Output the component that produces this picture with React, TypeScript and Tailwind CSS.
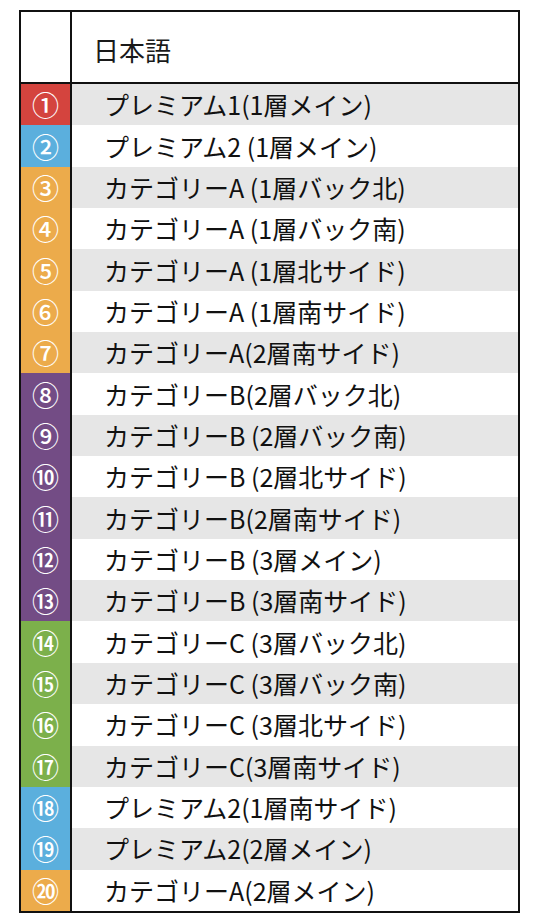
import React from 'react';

type Row = { no: string; label: string; color: string };

const RED = 'bg-[#d4443e]';
const BLUE = 'bg-[#5bafdd]';
const ORANGE = 'bg-[#ecab4b]';
const PURPLE = 'bg-[#734c85]';
const GREEN = 'bg-[#7cb04b]';

const rows: Row[] = [
  { no: '①', label: 'プレミアム1(1層メイン)', color: RED },
  { no: '②', label: 'プレミアム2 (1層メイン)', color: BLUE },
  { no: '③', label: 'カテゴリーA (1層バック北)', color: ORANGE },
  { no: '④', label: 'カテゴリーA (1層バック南)', color: ORANGE },
  { no: '⑤', label: 'カテゴリーA (1層北サイド)', color: ORANGE },
  { no: '⑥', label: 'カテゴリーA (1層南サイド)', color: ORANGE },
  { no: '⑦', label: 'カテゴリーA(2層南サイド)', color: ORANGE },
  { no: '⑧', label: 'カテゴリーB(2層バック北)', color: PURPLE },
  { no: '⑨', label: 'カテゴリーB (2層バック南)', color: PURPLE },
  { no: '⑩', label: 'カテゴリーB (2層北サイド)', color: PURPLE },
  { no: '⑪', label: 'カテゴリーB(2層南サイド)', color: PURPLE },
  { no: '⑫', label: 'カテゴリーB (3層メイン)', color: PURPLE },
  { no: '⑬', label: 'カテゴリーB (3層南サイド)', color: PURPLE },
  { no: '⑭', label: 'カテゴリーC (3層バック北)', color: GREEN },
  { no: '⑮', label: 'カテゴリーC (3層バック南)', color: GREEN },
  { no: '⑯', label: 'カテゴリーC (3層北サイド)', color: GREEN },
  { no: '⑰', label: 'カテゴリーC(3層南サイド)', color: GREEN },
  { no: '⑱', label: 'プレミアム2(1層南サイド)', color: BLUE },
  { no: '⑲', label: 'プレミアム2(2層メイン)', color: BLUE },
  { no: '⑳', label: 'カテゴリーA(2層メイン)', color: ORANGE },
];

const font = { fontFamily: '"Noto Sans CJK JP", "Noto Sans", sans-serif' };

const App: React.FC = () => {
  return (
    <div className="min-h-[922px] w-[536px] bg-white pt-[10px] pl-[19px]" style={font}>
      <div className="w-[501px] border-2 border-[#111]">
        {/* header */}
        <div className="flex h-[72px] border-b-2 border-[#111]">
          <div className="w-[51px] shrink-0 border-r-2 border-[#111]" />
          <div className="flex items-center pt-[5px] pl-[21px] text-[26px] text-[#1a1a1a]">日本語</div>
        </div>
        {rows.map((row, i) => (
          <div key={row.no} className="flex h-[41.35px]">
            <div className={`${row.color} flex w-[51px] shrink-0 items-center justify-center border-r-2 border-[#111] text-[27px] font-medium leading-none text-white`}>
              {row.no}
            </div>
            <div className={`flex flex-1 items-center pl-[32px] text-[25px] leading-none text-[#111] ${i % 2 === 0 ? 'bg-[#e6e6e6]' : 'bg-white'}`}>
              {row.label}
            </div>
          </div>
        ))}
      </div>
    </div>
  );
};

export default App;
